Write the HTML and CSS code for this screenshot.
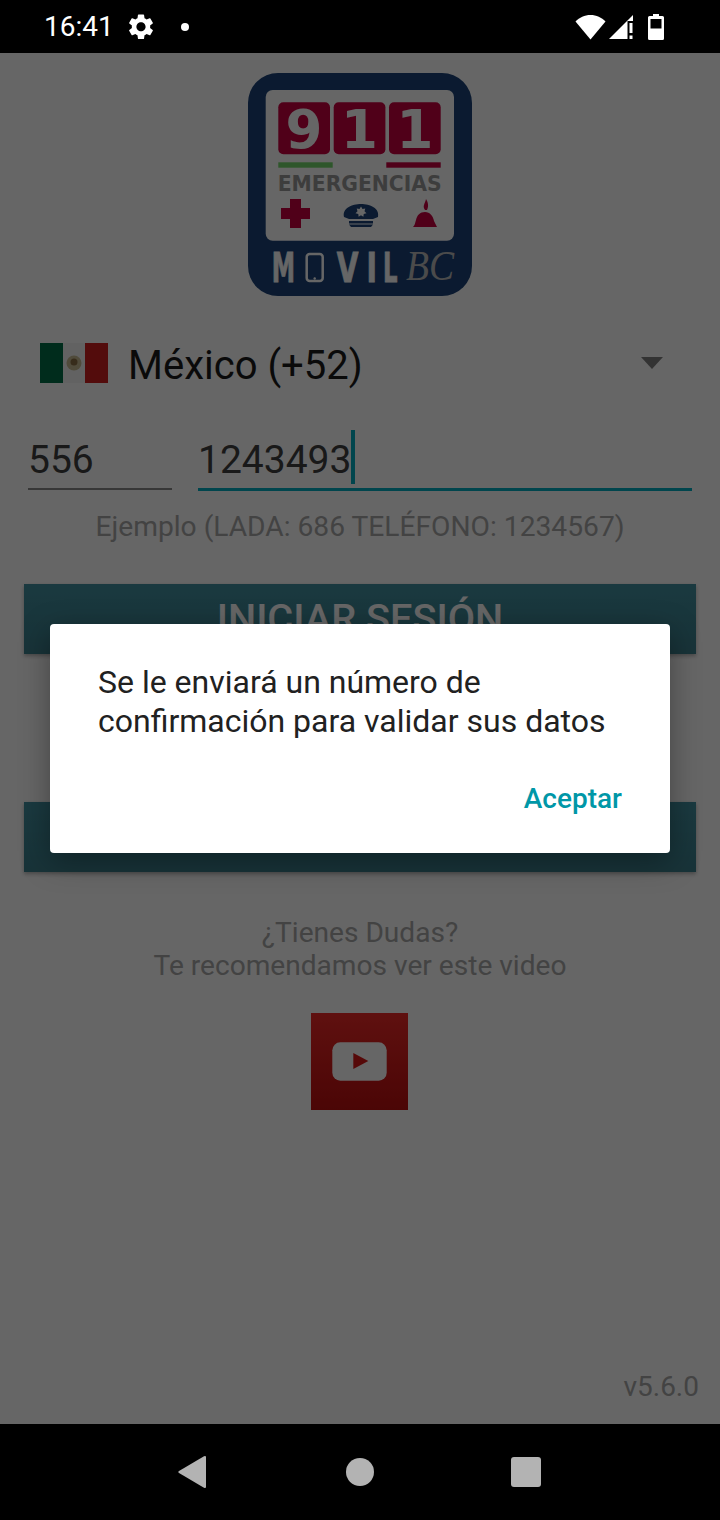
FILE: index.html
```html
<!DOCTYPE html>
<html lang="es">
<head>
	<meta charset="UTF-8">
	<title>911 Emergencias Movil BC</title>
	<link rel="stylesheet" href="styles.css">
</head>
<body>
	<!-- barra de estado -->
	<div class="status">
		<span class="time">16:41</span>
		<svg class="gear" viewBox="2.6 2 18.8 20"><path fill="#fff" d="M19.14 12.94c.04-.3.06-.61.06-.94 0-.32-.02-.64-.07-.94l2.03-1.58a.49.49 0 0 0 .12-.61l-1.92-3.32a.488.488 0 0 0-.59-.22l-2.39.96c-.5-.38-1.03-.7-1.62-.94l-.36-2.54a.484.484 0 0 0-.48-.41h-3.84c-.24 0-.43.17-.47.41l-.36 2.54c-.59.24-1.13.57-1.62.94l-2.39-.96c-.22-.08-.47 0-.59.22L2.74 8.87c-.12.21-.08.47.12.61l2.03 1.58c-.05.3-.09.63-.09.94s.02.64.07.94l-2.03 1.58a.49.49 0 0 0-.12.61l1.92 3.32c.12.22.37.29.59.22l2.39-.96c.5.38 1.03.7 1.62.94l.36 2.54c.05.24.24.41.48.41h3.84c.24 0 .44-.17.47-.41l.36-2.54c.59-.24 1.13-.56 1.62-.94l2.39.96c.22.08.47 0 .59-.22l1.92-3.32c.12-.22.07-.47-.12-.61l-2.01-1.58zM12 15.6c-1.98 0-3.6-1.62-3.6-3.6s1.62-3.6 3.6-3.6 3.6 1.62 3.6 3.6-1.62 3.6-3.6 3.6z"/></svg>
		<span class="dot"></span>
		<div class="status-right">
			<svg class="wifi" viewBox="0 0 31 26"><path fill="#fff" d="M15.5 25.5 .5 7.5C4.5 3.5 9.5 1 15.5 1s11 2.500 15 6.500z"/></svg>
			<svg class="signal" viewBox="0 0 25 26"><path fill="#fff" d="M24 1v6h-5.500v18H0z"/><rect x="20.500" y="9" width="3" height="10" fill="#fff"/><rect x="20.500" y="21.500" width="3" height="3.500" fill="#fff"/></svg>
			<svg class="battery" viewBox="0 0 16 26"><path fill="#fff" fill-rule="evenodd" d="M5 0h6v2h3.500q1.500 0 1.500 1.500V24.500q0 1.500-1.500 1.500h-13Q0 26 0 24.500V3.500Q0 2 1.500 2H5zM2.500 5v9.500h11V5z"/></svg>
		</div>
	</div>

	<div class="screen">
		<svg class="logo" viewBox="8 13 224 224">
			<rect x="8" y="13" width="224" height="223" rx="30" fill="#1c4378"/>
			<rect x="25.700" y="30" width="188.300" height="150.700" rx="7" fill="#fff"/>
			<rect x="38.300" y="42.300" width="51.700" height="52" rx="5" fill="#c80040"/>
			<rect x="93.700" y="42.300" width="51.700" height="52" rx="5" fill="#c80040"/>
			<rect x="149" y="42.300" width="51.700" height="52" rx="5" fill="#c80040"/>
			<text class="logo-num" x="64" y="88" text-anchor="middle">9</text>
			<text class="logo-num" x="119.500" y="88" text-anchor="middle">1</text>
			<text class="logo-num" x="175" y="88" text-anchor="middle">1</text>
			<rect x="38.300" y="102.300" width="54.400" height="5.400" fill="#74d86c"/>
			<rect x="146.300" y="102.300" width="54.400" height="5.400" fill="#c80040"/>
			<text class="logo-em" x="37.700" y="130.500" textLength="164" lengthAdjust="spacingAndGlyphs">EMERGENCIAS</text>
			<path fill="#c80040" d="M50 139h11v9h9v11h-9v9H50v-9h-9v-11h9z"/>
			<path fill="#1c4378" d="M104 157c-2-9 8-13 17-13s19 4 17 13l-5 2h-24zM109 161h24v2.500h-24zM109 164.500h24l-2 2.500h-20z"/>
			<path fill="#fff" d="M121 146.500l1.500 2.500 2.800-.6-.8 2.800 2 2-2.800.8-.3 2.800-2.400-1.500-2.400 1.500-.3-2.800-2.800-.8 2-2-.8-2.800 2.800.6z"/>
			<path fill="#c80040" d="M173 167c2-2 2-4 3-7 1-5 4-8 9-8s8 4 9 9l3 6zM185 150c-3-4 0-6 1-11 2 3 3 7 1 11z"/>
			<text class="logo-mv" x="31.700" y="221.500" textLength="23.300" lengthAdjust="spacingAndGlyphs">M</text>
			<rect x="66.700" y="194" width="16" height="27" rx="3" fill="none" stroke="#fff" stroke-width="2.500"/>
			<circle cx="74.700" cy="218.500" r="1.200" fill="#fff"/>
			<text class="logo-mv" x="96.700" y="221.500" textLength="21.700" lengthAdjust="spacingAndGlyphs">V</text>
			<text class="logo-mv" x="126.500" y="221.500" textLength="10.500" lengthAdjust="spacingAndGlyphs">I</text>
			<text class="logo-mv" x="143" y="221.500" textLength="14.500" lengthAdjust="spacingAndGlyphs">L</text>
			<text class="logo-bc" x="166" y="220" textLength="48" lengthAdjust="spacingAndGlyphs">BC</text>
		</svg>

		<div class="country">
			<svg class="flag" viewBox="0 0 68 40">
				<rect width="23" height="40" fill="#006e48"/>
				<rect x="23" width="22" height="40" fill="#f4f4f4"/>
				<rect x="45" width="23" height="40" fill="#d01e1e"/>
				<circle cx="34" cy="20" r="7.500" fill="#c8bc94"/>
				<circle cx="34" cy="19" r="3.500" fill="#8a6e44"/>
			</svg>
			<span class="country-name">México (+52)</span>
			<span class="arrow"></span>
		</div>

		<div class="phone">
			<div class="field lada">556</div>
			<div class="field number">1243493<span class="caret"></span></div>
		</div>
		<p class="hint">Ejemplo (LADA: 686 TELÉFONO: 1234567)</p>

		<div class="btn login">INICIAR SESIÓN</div>
		<div class="btn second"></div>

		<p class="help">¿Tienes Dudas?<br>Te recomendamos ver este video</p>
		<svg class="yt" viewBox="0 0 97 97">
			<defs>
				<linearGradient id="ytbg" x1="0" y1="0" x2="0" y2="1">
					<stop offset="0" stop-color="#ee2a28"/>
					<stop offset="1" stop-color="#bb0e0e"/>
				</linearGradient>
			</defs>
			<rect width="97" height="97" fill="url(#ytbg)"/>
			<rect x="21.300" y="29.300" width="54.400" height="38.400" rx="8" fill="#fff"/>
			<path fill="#d81818" d="M42.300 40l15 8-15 8z"/>
		</svg>
		<div class="version">v5.6.0</div>

		<div class="scrim">
			<div class="dialog">
				<p class="dialog-text">Se le enviará un número de confirmación para validar sus datos</p>
				<div class="dialog-actions"><span class="accept">Aceptar</span></div>
			</div>
		</div>
	</div>

	<!-- barra de navegacion -->
	<div class="nav">
		<svg class="nav-back" viewBox="0 0 28 32"><path fill="#b3b3b3" d="M27 0q1 0 1 1v30q0 1-1 1-.4 0-1-.3L.6 16.800q-.6-.8 0-1.600L26 .3q.6-.3 1-.3z"/></svg>
		<span class="nav-home"></span>
		<span class="nav-recent"></span>
	</div>
</body>
</html>
```

FILE: styles.css
```css
*{box-sizing:border-box;}
html,body{margin:0;padding:0;}
body{width:720px;height:1520px;display:flex;flex-direction:column;font-family:Roboto,"Liberation Sans",sans-serif;background:#000;overflow:hidden;}
p{margin:0;}

.status{height:53px;background:#000;color:#fff;display:flex;align-items:center;padding:0 56px 0 44px;}
.time{font-size:28px;line-height:53px;width:85px;}
.gear{width:24px;height:25.500px;margin-top:1px;}
.dot{width:8px;height:8px;border-radius:50%;background:#fff;margin-left:28px;}
.status-right{margin-left:auto;display:flex;align-items:center;}
.wifi{width:31px;height:26px;}
.signal{width:25px;height:26px;margin-left:3px;}
.battery{width:16px;height:26px;margin-left:14px;}

.screen{position:relative;height:1371px;background:#fff;display:flex;flex-direction:column;}
.logo{display:block;width:224px;height:224px;margin:20px 0 0 248px;}
.logo-num{font:bold 53px "DejaVu Sans",sans-serif;fill:#fff;}
.logo-em{font:bold 21px "DejaVu Sans",sans-serif;fill:#999;}
.logo-mv{font:bold 40px "DejaVu Sans",sans-serif;fill:#fff;stroke:#fff;stroke-width:.8px;}
.logo-bc{font:italic 42px "Liberation Serif",serif;fill:#bbb;}

.country{display:flex;align-items:center;height:40px;margin-top:46px;padding:0 57px 0 40px;}
.flag{width:68px;height:40px;}
.country-name{font-size:40px;line-height:46px;color:#1a1a1a;margin:6px 0 0 20px;}
.arrow{margin-left:auto;width:0;height:0;border-left:11px solid transparent;border-right:11px solid transparent;border-top:12px solid #808080;margin-top:-1px;}

.phone{display:flex;gap:26px;margin-top:47px;padding:0 28px;}
.field{position:relative;height:61px;font-size:39px;line-height:60px;color:#3f3f3f;}
.lada{width:144px;height:60px;border-bottom:2px solid #8a8a8a;}
.number{width:494px;border-bottom:3px solid #00acc1;}
.caret{display:inline-block;width:4px;height:54px;background:#00acc1;vertical-align:top;}
.hint{margin-top:18px;font-size:28.200px;line-height:35px;text-align:center;color:#a8a8a8;}

.btn{height:70px;margin:0 24px;background:linear-gradient(#4290a0,#3c7f8c);color:#fff;box-shadow:0 2px 4px rgba(0,0,0,.3);text-align:center;font-size:39.700px;font-weight:500;line-height:70px;}
.login{margin-top:40px;}
.second{margin-top:148px;}

.help{margin-top:44px;font-size:28.100px;line-height:33px;text-align:center;color:#a8a8a8;}
.yt{display:block;width:97px;height:97px;margin:31px 0 0 311px;}
.version{margin-top:auto;padding:0 21px 21px 0;text-align:right;font-size:28px;line-height:33px;color:#a8a8a8;}

.scrim{position:absolute;inset:0;background:rgba(0,0,0,.6);display:flex;align-items:center;justify-content:center;}
.dialog{width:620px;height:229px;background:#fff;border-radius:4px;box-shadow:0 8px 30px rgba(0,0,0,.35);padding:39px 48px 0;display:flex;flex-direction:column;}
.dialog-text{font-size:32px;line-height:39px;color:#212121;}
.dialog-actions{display:flex;justify-content:flex-end;margin-top:40px;}
.accept{font-size:28px;font-weight:500;line-height:36px;color:#0097a7;}

.nav{height:96px;background:#000;position:relative;}
.nav-back{position:absolute;left:178px;top:32px;width:28px;height:32px;}
.nav-home{position:absolute;left:346px;top:34px;width:28px;height:28px;border-radius:50%;background:#b3b3b3;}
.nav-recent{position:absolute;left:511px;top:33px;width:30px;height:30px;border-radius:3px;background:#b3b3b3;}
```
